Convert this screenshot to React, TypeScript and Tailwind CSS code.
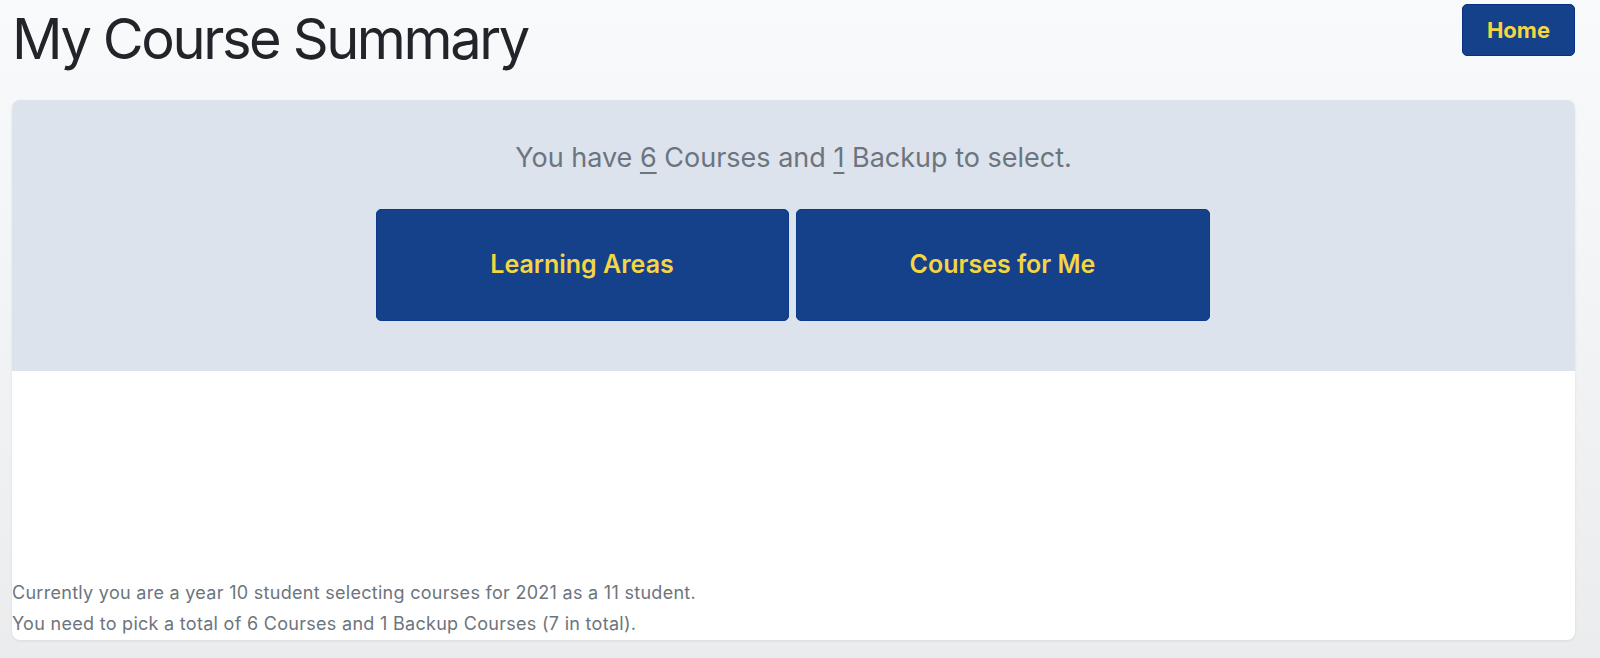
const App = () => {
    return (
        <div className="min-h-[658px] bg-gradient-to-b from-[#f9fafb] to-[#ebecee] pl-3 pr-[25px] font-['Inter',sans-serif]">
            <div className="flex items-start justify-between">
                <h1 className="pt-[4px] text-[56px] leading-[70px] font-normal tracking-[-0.043em] text-[#212529]">
                    My Course Summary
                </h1>
                <button className="mt-[4px] h-[52px] w-[113px] rounded-[5px] border border-[#0b2f86] bg-[#14418a] text-[22px] font-bold text-[#f5d542]">
                    Home
                </button>
            </div>

            <div className="mt-[26px] overflow-hidden rounded-lg bg-white shadow-[0_1px_3px_rgba(0,0,0,0.08)]">
                <div className="h-[271px] bg-[#dce3ed] pt-[40px]">
                    <p className="text-center text-[27px] leading-[36px] text-[#6c757d]">
                        You have <u className="underline-offset-[5px]">6</u> Courses and{" "}
                        <u className="underline-offset-[5px]">1</u> Backup to select.
                    </p>
                    <div className="mt-[33px] flex justify-center gap-[7px] pr-[2px]">
                        <button className="h-[112px] w-[413px] rounded-[5px] border border-[#0b3a8c] bg-[#14418a] text-[25px] font-semibold text-[#f5d542]">
                            Learning Areas
                        </button>
                        <button className="h-[112px] w-[414px] rounded-[5px] border border-[#0b3a8c] bg-[#14418a] text-[25px] font-semibold text-[#f5d542]">
                            Courses for Me
                        </button>
                    </div>
                </div>
                <div className="flex h-[269px] flex-col justify-end pb-[1px] text-[18px] leading-[31px] tracking-[0.016em] text-[#6c757d]">
                    <p>Currently you are a year 10 student selecting courses for 2021 as a 11 student.</p>
                    <p>You need to pick a total of 6 Courses and 1 Backup Courses (7 in total).</p>
                </div>
            </div>
        </div>
    );
};

export default App;
